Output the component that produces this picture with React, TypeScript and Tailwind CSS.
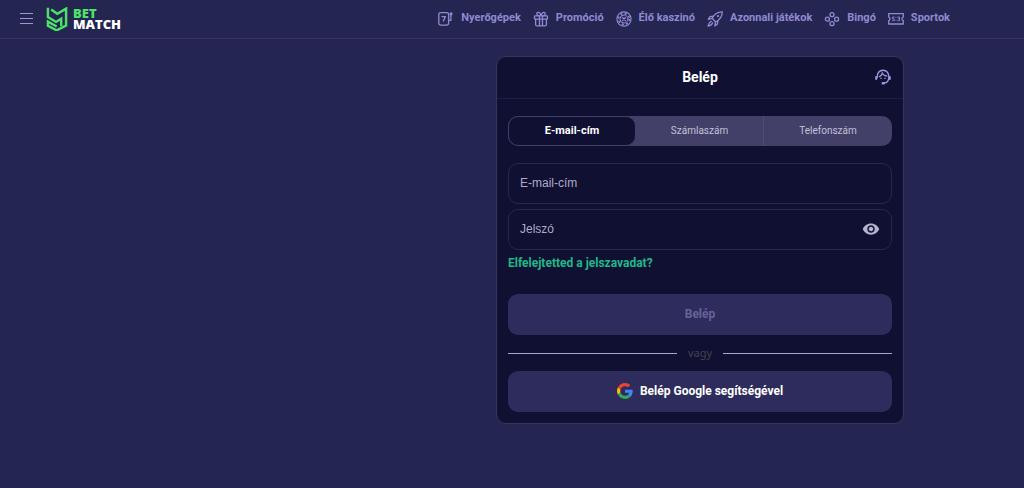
import { useState, type ReactNode } from "react";
import { MdVisibility } from "react-icons/md";

function LogoMark() {
  return (
    <svg viewBox="0 0 66 74" className="h-6 w-6" fill="none" stroke="#4be267" strokeWidth="7.5" strokeLinejoin="miter" aria-hidden="true">
      <path d="M5 2v29l25 15 16-10v23" />
      <path d="M15 8l19 13L61 5v52L32 72 5 58V45l27 15" />
    </svg>
  );
}

function GoogleMark() {
  return (
    <svg viewBox="0 0 48 48" className="size-4" aria-hidden="true">
      <path fill="#EA4335" d="M24 9.500c3.540 0 6.710 1.220 9.210 3.600l6.850-6.850C35.900 2.380 30.470 0 24 0 14.620 0 6.510 5.380 2.560 13.220l7.980 6.190C12.430 13.720 17.740 9.500 24 9.500z" />
      <path fill="#4285F4" d="M46.980 24.550c0-1.570-.15-3.090-.38-4.550H24v9.020h12.940c-.58 2.960-2.260 5.480-4.780 7.180l7.730 6c4.510-4.180 7.090-10.360 7.090-17.650z" />
      <path fill="#FBBC05" d="M10.530 28.590c-.48-1.450-.76-2.990-.76-4.590s.27-3.140.76-4.590l-7.980-6.190C.92 16.460 0 20.120 0 24c0 3.880.92 7.540 2.560 10.780l7.970-6.190z" />
      <path fill="#34A853" d="M24 48c6.480 0 11.930-2.130 15.890-5.810l-7.730-6c-2.150 1.450-4.920 2.300-8.160 2.300-6.260 0-11.570-4.220-13.470-9.910l-7.980 6.190C6.510 42.620 14.620 48 24 48z" />
    </svg>
  );
}

function Icon({ children }: { children: ReactNode }) {
  return (
    <svg viewBox="0 0 16 16" className="size-4 shrink-0" fill="none" stroke="currentColor" strokeWidth="1.3" strokeLinecap="round" strokeLinejoin="round" aria-hidden="true">
      {children}
    </svg>
  );
}

const links = [
  {
    label: "Nyerőgépek",
    icon: (
      <Icon>
        <rect x="0.800" y="1.700" width="9.800" height="12.400" rx="2" />
        <path d="M4 5.600h3.400L5.300 10" />
        <path d="M11 9.400h1.900V3.500" />
        <circle cx="13" cy="2.800" r="1" />
      </Icon>
    ),
  },
  {
    label: "Promóció",
    icon: (
      <Icon>
        <rect x="1.500" y="4.800" width="13" height="3.400" rx="0.800" />
        <path d="M2.600 8.200v5.200q0 1.400 1.400 1.400h8q1.400 0 1.400-1.400V8.200M6.500 4.800v10M9.500 4.800v10" />
        <path d="M8 4.600C7.400 2 6 1.100 4.800 1.400 3.200 1.900 3.600 4.400 5.200 4.600M8 4.600C8.600 2 10 1.100 11.200 1.400 12.800 1.900 12.400 4.400 10.800 4.600" />
      </Icon>
    ),
  },
  {
    label: "Élő kaszinó",
    icon: (
      <Icon>
        <circle cx="8" cy="8" r="7.100" strokeWidth="1.100" />
        <circle cx="8" cy="8" r="5.500" strokeWidth="1.700" strokeDasharray="2 2.320" strokeLinecap="butt" />
        <circle cx="8" cy="8" r="4" strokeWidth="1" />
        <path d="M6.500 6.500l3 3M9.500 6.500l-3 3" />
      </Icon>
    ),
  },
  {
    label: "Azonnali játékok",
    icon: (
      <Icon>
        <path d="M15.300 0.800C10.800 0.700 7.500 2.400 5.100 7.300L8.600 11C13.300 8.700 15.200 5.500 15.300 0.800Z" />
        <path d="M6.300 5.200L3 5.600 1.300 8.300l3.800-1M10.800 9.700L10.500 13l-2.700 1.900.8-3.900M4.300 10.300C2.600 10.700 1.800 12.300 1 15.200 3.600 14.600 5.100 13.700 5.700 11.800" />
        <circle cx="11" cy="5.100" r="0.500" />
      </Icon>
    ),
  },
  {
    label: "Bingó",
    icon: (
      <Icon>
        <circle cx="8" cy="3.700" r="2" />
        <circle cx="3.400" cy="8.200" r="2" />
        <circle cx="12.600" cy="8.200" r="2" />
        <circle cx="8" cy="12.700" r="2" />
      </Icon>
    ),
  },
  {
    label: "Sportok",
    icon: (
      <Icon>
        <path d="M.7 2.600h14.600v3.400q-1.300.2-1.300 1.800t1.300 1.800V13H.7V9.600q1.300-.2 1.300-1.800T.7 6z" />
        <path d="M6.200 6H4.500v1.700h1.700v2H4.500M8 6.300v.1M8 9.300v.1M9.800 6h1.700v3.700H9.800M10.200 7.800h1.300" strokeWidth="0.900" />
      </Icon>
    ),
  },
];

function SupportIcon() {
  return (
    <svg viewBox="0 0 16 16" className="size-4" fill="none" stroke="currentColor" strokeWidth="1.400" strokeLinecap="round" aria-hidden="true">
      <path d="M2.200 8.500C1.800 4.200 4.400 1.200 8 1.200s6.200 3 5.800 7.300c-.1 3-1.800 5.300-4.800 5.500" />
      <path d="M1.200 8v2M14.800 8v2" strokeWidth="2" />
      <path d="M4.300 7.600C6.200 6.900 7 5.700 7.300 4.200c1 1.800 2.500 2.700 4.500 2.800" strokeWidth="1.300" />
      <path d="M6 9.300v.1M10 9.300v.1" />
      <path d="M7.800 14.200h1" strokeWidth="2.400" />
    </svg>
  );
}

const tabs = ["E-mail-cím", "Számlaszám", "Telefonszám"];

export default function App() {
  const [tab, setTab] = useState(0);
  const [visible, setVisible] = useState(false);

  return (
    <div className="min-h-screen bg-[#252552] font-['Roboto',sans-serif]">
      <header className="flex items-center justify-between border-b border-[#37325f] pr-[74px] pl-5">
        <div className="flex h-[38px] items-center gap-3">
          <button type="button" aria-label="Menü" className="flex w-[13px] flex-col gap-1 pb-[2px]">
            <span className="h-px bg-[#9c98d8]" />
            <span className="h-px bg-[#9c98d8]" />
            <span className="h-px bg-[#9c98d8]" />
          </button>
          <a href="#" className="flex items-center gap-1 font-['Open_Sans',sans-serif] text-[13px] leading-[11px] font-extrabold">
            <LogoMark />
            <span className="flex flex-col">
              <span className="text-[#4be267]">BET</span>
              <span className="text-white">MATCH</span>
            </span>
          </a>
        </div>
        <nav className="flex items-center gap-3 pb-px text-[11px] font-bold text-[#8f8ad0]">
          {links.map((l) => (
            <a key={l.label} href="#" className="flex items-center gap-[7px] whitespace-nowrap">
              {l.icon}
              {l.label}
            </a>
          ))}
        </nav>
      </header>

      <main className="flex justify-end pt-[17px] pr-[120px] pb-8">
        <section className="w-full max-w-[408px] rounded-[10px] border border-[#36335e] bg-[#101033]">
          <div className="grid h-[42px] grid-cols-[1fr_auto_1fr] items-center border-b border-[#1f1d45] px-3 pb-px">
            <h1 className="col-start-2 text-sm font-bold text-white">Belép</h1>
            <button type="button" aria-label="Ügyfélszolgálat" className="justify-self-end text-[#9c97dc]">
              <SupportIcon />
            </button>
          </div>

          <form className="flex flex-col px-[11px] pt-[17px] pb-[11px]" onSubmit={(e) => e.preventDefault()}>
            <div className="grid h-[30px] grid-cols-3 overflow-hidden rounded-[10px] bg-[#423f69]">
              {tabs.map((t, i) => (
                <button
                  key={t}
                  type="button"
                  aria-pressed={i === tab}
                  onClick={() => setTab(i)}
                  className={
                    i === tab
                      ? "rounded-[10px] border border-[#423f69] bg-[#101033] text-[11px] font-bold text-white"
                      : "border-r border-[#4e4b74] pb-px text-[10px] text-[#c3c1d8] last:border-r-0"
                  }
                >
                  {t}
                </button>
              ))}
            </div>

            <input
              aria-label="E-mail-cím"
              placeholder="E-mail-cím"
              className="mt-[17px] h-[41px] rounded-[10px] border border-[#28264d] bg-transparent px-[11px] pb-[2px] font-['Liberation_Sans',sans-serif] text-xs text-white outline-none placeholder:text-[#adabc4]"
            />
            <div className="mt-[5px] flex h-[41px] items-center rounded-[10px] border border-[#28264d] px-[11px] pb-px">
              <input
                aria-label="Jelszó"
                placeholder="Jelszó"
                type={visible ? "text" : "password"}
                className="min-w-0 flex-1 bg-transparent font-['Liberation_Sans',sans-serif] text-xs text-white outline-none placeholder:text-[#adabc4]"
              />
              <button type="button" aria-label="Jelszó megjelenítése" onClick={() => setVisible(!visible)} className="text-[#b4b3d0]">
                <MdVisibility className="size-[18px]" />
              </button>
            </div>
            <a href="#" className="mt-1 self-start text-xs leading-[18px] font-bold text-[#20b888]">
              Elfelejtetted a jelszavadat?
            </a>

            <button type="submit" disabled className="mt-[22px] h-[41px] rounded-[10px] bg-[#2e2c5c] pb-px text-xs font-bold text-[#66629a]">
              Belép
            </button>
            <div className="flex h-9 items-center gap-[11px] font-['Noto_Sans',sans-serif] text-[11px] text-[#45434f]">
              <span className="h-px flex-1 bg-[#a9a6cc]" />
              vagy
              <span className="h-px flex-1 bg-[#a9a6cc]" />
            </div>
            <button type="button" className="flex h-[41px] items-center justify-center gap-[7px] rounded-[10px] bg-[#2e2c5c] pb-px text-xs font-bold text-white">
              <GoogleMark />
              Belép Google segítségével
            </button>
          </form>
        </section>
      </main>
    </div>
  );
}
